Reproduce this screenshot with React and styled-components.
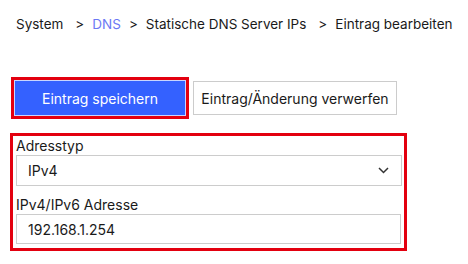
import React from "react"
import styled, { createGlobalStyle } from "styled-components"

const GlobalStyle = createGlobalStyle`
  html, body {
    margin: 0;
    padding: 0;
    background: #ffffff;
  }
  body {
    font-family: Inter, "Noto Sans", sans-serif;
    color: #1a1a1a;
  }
`

const CRUMBS = [
  { label: "System", trail: true },
  { label: "DNS", link: true },
  { label: "Statische DNS Server IPs", trail: true },
  { label: "Eintrag bearbeiten" },
]

function Chevron() {
  return (
    <svg width="11" height="7" viewBox="0 0 11 7" fill="none">
      <path d="M1 1l4.5 4.5L10 1" stroke="#333" strokeWidth="1.5" />
    </svg>
  )
}

export default function App() {
  return (
    <>
      <GlobalStyle />
      <Page>
        <Breadcrumb>
          {CRUMBS.map((c, i) => (
            <React.Fragment key={i}>
              {i > 0 && <Separator>&gt;</Separator>}
              <Crumb $link={c.link} $trail={c.trail}>
                {c.label}
              </Crumb>
            </React.Fragment>
          ))}
        </Breadcrumb>

        <Actions>
          <Highlight>
            <PrimaryButton>Eintrag speichern</PrimaryButton>
          </Highlight>
          <SecondaryButton>Eintrag/Änderung verwerfen</SecondaryButton>
        </Actions>

        <FieldBox>
          <Label>Adresstyp</Label>
          <Select>
            <span>IPv4</span>
            <Chevron />
          </Select>
          <Label $spaced>IPv4/IPv6 Adresse</Label>
          <Input>192.168.1.254</Input>
        </FieldBox>
      </Page>
    </>
  )
}

const Page = styled.div`
  width: 468px;
  height: 264px;
  box-sizing: border-box;
  padding: 16px 0 0 10px;
  overflow: hidden;
`

const Breadcrumb = styled.div`
  display: flex;
  align-items: baseline;
  padding-left: 6px;
  font-size: 13.5px;
  line-height: 17px;
  white-space: nowrap;
`

const Crumb = styled.span`
  color: ${p => (p.$link ? "#6b78f5" : "#1a1a1a")};
  margin-right: ${p => (p.$trail ? "4px" : "0")};
`

const Separator = styled.span`
  margin: 0 8px;
`

const Actions = styled.div`
  display: flex;
  align-items: center;
  margin-top: 44px;
  margin-left: 1px;
  gap: 4px;
`

const Highlight = styled.div`
  display: flex;
  border: 3px solid #e3000f;
`

const PrimaryButton = styled.button`
  width: 172px;
  height: 36px;
  box-sizing: border-box;
  border: 1px solid #c9d5ff;
  background: #3461ff;
  color: #ffffff;
  font-family: Inter, "Noto Sans", sans-serif;
  font-size: 14px;
  padding: 0;
  margin: 0;
  cursor: pointer;
`

const SecondaryButton = styled.button`
  width: 204px;
  height: 34px;
  box-sizing: border-box;
  border: 1px solid #cccccc;
  background: #ffffff;
  color: #1a1a1a;
  font-family: Inter, "Noto Sans", sans-serif;
  font-size: 14px;
  padding: 0;
  margin: 0;
  cursor: pointer;
`

const FieldBox = styled.div`
  width: 397px;
  box-sizing: border-box;
  margin-top: 14px;
  border: 3px solid #e3000f;
  padding: 1px 2px 4px 3px;
  display: flex;
  flex-direction: column;
`

const Label = styled.div`
  font-size: 14px;
  line-height: 18px;
  color: #1a1a1a;
  margin-top: ${p => (p.$spaced ? "10px" : "0")};
`

const Select = styled.div`
  height: 31px;
  box-sizing: border-box;
  border: 1px solid #cccccc;
  display: flex;
  align-items: center;
  justify-content: space-between;
  padding: 0 12px 0 11px;
  font-size: 14px;
`

const Input = styled.div`
  height: 30px;
  width: 385px;
  box-sizing: border-box;
  border: 1px solid #cccccc;
  display: flex;
  align-items: center;
  padding: 0 11px;
  font-size: 14px;
`
